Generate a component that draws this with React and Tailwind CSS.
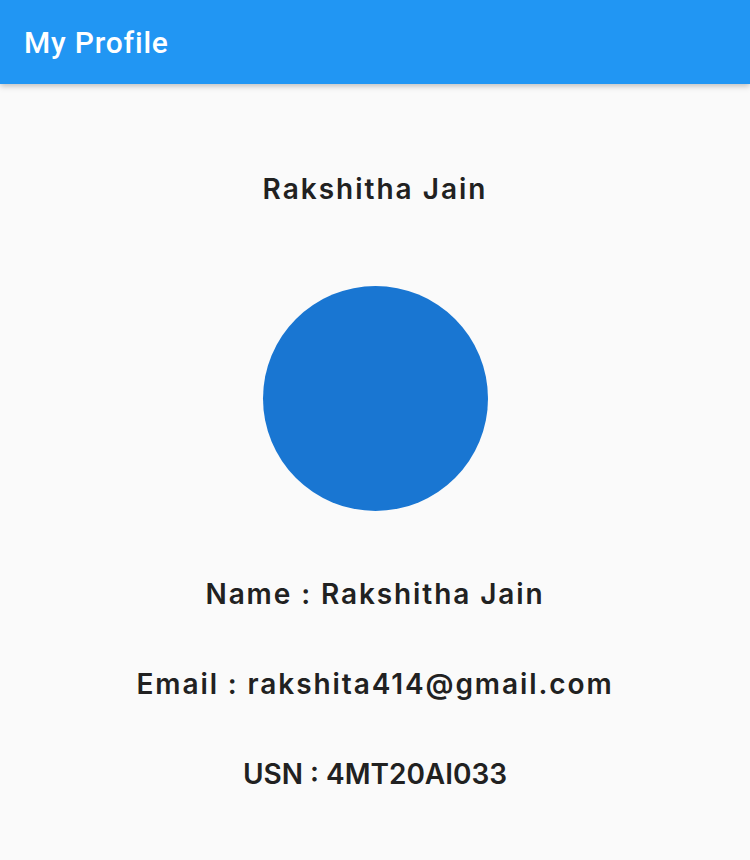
import React from "react";

const ProfileLine = ({ children, tight }) => (
  <p
    className={
      tight
        ? "h-[90px] flex items-center justify-center text-[28px] font-semibold text-[#212121] tracking-normal"
        : "h-[90px] flex items-center justify-center text-[28px] font-semibold text-[#212121] tracking-[1.9px]"
    }
  >
    {children}
  </p>
);

const App = () => {
  return (
    <div className="w-[750px] h-[860px] bg-[#fafafa] font-['Inter',sans-serif] overflow-hidden">
      {/* App bar */}
      <header className="h-[84px] bg-[#2196f3] flex items-center px-6 shadow-[0_2px_6px_rgba(0,0,0,0.25)] relative z-10">
        <h1 className="font-['Roboto',sans-serif] text-[30px] font-medium text-white tracking-[0.8px]">My Profile</h1>
      </header>

      <main className="flex flex-col items-center">
        <p className="mt-[84px] h-[42px] flex items-center text-[28px] font-semibold text-[#212121] tracking-[2px]">
          Rakshitha Jain
        </p>

        <div className="mt-[76px] w-[225px] h-[225px] rounded-full bg-[#1976d2]" />

        <div className="mt-[38px] flex flex-col">
          <ProfileLine>Name : Rakshitha Jain</ProfileLine>
          <ProfileLine>Email : rakshita414@gmail.com</ProfileLine>
          <ProfileLine tight>USN : 4MT20AI033</ProfileLine>
        </div>
      </main>
    </div>
  );
};

export default App;
